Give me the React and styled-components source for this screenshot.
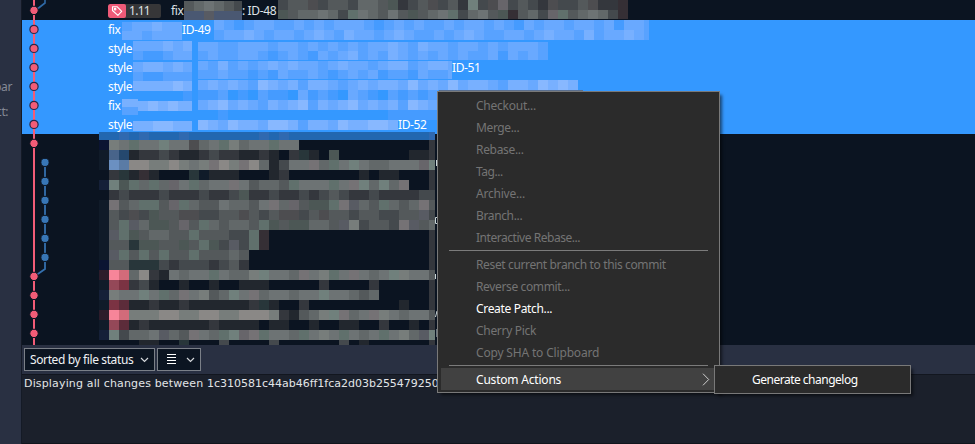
import React from "react";
import styled, { createGlobalStyle } from "styled-components";

const GlobalStyle = createGlobalStyle`
  * { box-sizing: border-box; }
  html, body { margin: 0; padding: 0; overflow: hidden; background: #0b1421; }
`;

const ui = `"Noto Sans", "Open Sans", sans-serif`;

const Window = styled.div`
  position: relative;
  display: flex;
  width: 975px;
  height: 444px;
  overflow: hidden;
  background: #0b1421;
  font: 12px/19px ${ui};
  letter-spacing: -0.36px;
  color: #fff;
  white-space: nowrap;
`;
const Sidebar = styled.aside`
  display: flex;
  flex-direction: column;
  align-items: flex-start;
  width: 22px;
  flex: none;
  padding-top: 74px;
  background: #293042;
  border-right: 1px solid #141a26;
  color: #858a96;
  overflow: hidden;
`;
const SideLabel = styled.span`
  height: 25px;
  line-height: 25px;
  margin-left: ${(p) => p.$shift}px;
`;
const Main = styled.main`
  display: flex;
  flex-direction: column;
  flex: 1;
  min-width: 0;
`;
const CommitList = styled.section`
  position: relative;
  height: 345px;
  flex: none;
  padding-top: 1px;
  overflow: hidden;
`;
const CommitRow = styled.div`
  display: flex;
  align-items: center;
  height: 19px;
  padding-left: 86px;
  background: ${(p) => (p.$selected ? "#3498ff" : "transparent")};
  color: ${(p) => (p.$selected ? "#fff" : "#dfe3e6")};
`;
const Label = styled.span`
  flex: none;
  width: ${(p) => p.$width}px;
`;
const TagBadge = styled.span`
  display: flex;
  align-items: center;
  width: 53px;
  height: 14px;
  margin-right: 10px;
  border-radius: 2px;
  background: #363638;
  overflow: hidden;
  letter-spacing: -0.7px;
`;
const TagIconBox = styled.span`
  display: flex;
  align-items: center;
  justify-content: center;
  width: 18px;
  height: 14px;
  margin-right: 3px;
  border-radius: 2px;
  background: #ef5a78;
`;
const Overlay = styled.svg`
  position: absolute;
  left: 0;
  top: 0;
  pointer-events: none;
`;
const FilterBar = styled.div`
  display: flex;
  align-items: flex-start;
  gap: 2px;
  height: 30px;
  flex: none;
  padding: 3px 0 0 2px;
  background: #293042;
  border-bottom: 1px solid #12161f;
`;
const Dropdown = styled.button`
  display: flex;
  align-items: center;
  justify-content: space-between;
  width: ${(p) => p.$width}px;
  height: 23px;
  margin: 0;
  padding: 0 5px 0 ${(p) => p.$pad}px;
  border: 1px solid #7b8088;
  background: #0c1522;
  color: #f0f2f4;
  font: 12px/20px ${ui};
  letter-spacing: -0.38px;
`;
const Status = styled.div`
  flex: 1;
  padding-left: 2px;
  background: #1b202b;
  border-bottom: 1px solid #11151d;
  font: 11px/18px "DejaVu Sans", sans-serif;
  letter-spacing: 0.155px;
  color: #e2e5e8;
`;
const Hash = styled.span`
  letter-spacing: -0.01px;
`;
const Menu = styled.div`
  position: absolute;
  left: ${(p) => p.$x}px;
  top: ${(p) => p.$y}px;
  width: ${(p) => p.$width}px;
  padding: 3px 3px 2px;
  border: 1px solid #797979;
  background: #2b2b2b;
  box-shadow: 3px 3px 3px -1px rgba(0, 0, 0, 0.55);
`;
const MenuItem = styled.div`
  display: flex;
  align-items: center;
  justify-content: space-between;
  height: 22px;
  padding: 0 ${(p) => (p.$active ? 6 : 0)}px ${(p) => (p.$active ? 0 : 1)}px ${(p) => p.$pad || 35}px;
  background: ${(p) => (p.$active ? "#414141" : "transparent")};
  color: ${(p) => (p.$enabled ? "#fff" : "#747474")};
  letter-spacing: ${(p) => p.$spacing}px;
`;
const Separator = styled.div`
  height: 1px;
  margin: ${(p) => p.$margin};
  background: #7b7b7b;
`;

const palette = {
  a: "#101b29", b: "#22272e", c: "#34373d", d: "#44494d", e: "#54595b",
  f: "#626869", g: "#6d7374", h: "#777d7b", i: "#8a8886",
  k: "#28363a", l: "#4c5755", m: "#60706c", n: "#70807c",
  p: "#352f35", q: "#4d4d50", r: "#67656a", s: "#757275",
  P: "#585b63", N: "#0b1432", V: "#152038", M: "#2d1c2b",
  1: "#48648a", 2: "#25486e", 3: "#6b90c1", 4: "#5a7ba5",
  5: "#f78599", 6: "#d26b7a", 7: "#944858", 8: "#7b3343", 9: "#5c2c3a",
  t: "#459bff", u: "#58a2ff", v: "#69a9ff", w: "#78b0ff", x: "#88b8ff",
  B: "#2267b0", C: "#3069b0", A: "#3498ff", S: "#4a5872",
};

const mosaics = [
  { x: 184, y: 1, h: 9.5, rows: ["efgfed", "SSPSSS"], w: 58 },
  { x: 278, y: 0, h: 9.5, w: 351, rows: [
    "deeqdeedffelcdeqdecndqrdedcqddeqccp",
    "leffgfdmgfegelefgmdfgelpefdrmefgfdp"] },
  { x: 122, y: 22, h: 9, w: 60, rows: ["uvvwvv", "vvuvvv"] },
  { x: 214, y: 20, h: 10, w: 435, rows: [
    "vutuvvuuvuvuvvvutuvuvuuvuvvuvutvuvvuvvuvtvvu",
    "uvvwvuvvuvwvuwvvuvwvuuvuvwvuuvvuvwvvuwuvvwvu"] },
  { x: 133, y: 41, h: 9.5, w: 59, rows: ["vvvwvw", "uttuvv"] },
  { x: 198, y: 42, h: 9, w: 351, rows: [
    "vvuuvvvuvvuvuvuvuvvwvuwvvuvvuvuvvvu",
    "uvuuvvutuvutvuvwuvuwvuvuvuvuuvtvuvu"] },
  { x: 133, y: 62, h: 9.5, w: 59, rows: ["vwwvwv", "uttuuu"] },
  { x: 198, y: 61, h: 9, w: 254, rows: ["vuwuvuvwvwvvuvwvvuvwwuvwwv", "uuvuututvuuvutuvuvtuutvuuv"] },
  { x: 133, y: 81, h: 10, w: 59, rows: ["wwwwxw", "AAAAAt"] },
  { x: 198, y: 80, h: 10, w: 381, rows: ["vwvwvuxwvwuwwvuvwvwwvxvwvxvwwvuwwvxwxw", "ttuAtAuttAvtutAvutAututu"] },
  { x: 122, y: 99, h: 8, w: 16, rows: ["ww", "uu"] },
  { x: 138, y: 101, h: 10, w: 54, rows: ["wxwxww"] },
  { x: 198, y: 100, h: 10, w: 240, rows: ["vwxvwvuwvwxuwvwxvwvwuxwv", "AAtAAAAAAAAAAAAAAAAttttt"] },
  { x: 133, y: 121, h: 10, w: 59, rows: ["wwxxww"] },
  { x: 198, y: 120, h: 10, w: 201, rows: ["xwvxwwvxxwuwwvxwwxxw"] },
  { x: 99, y: 132, h: 8, w: 336, rows: ["BBCBCBBBCBBBBBBBCBCBBBBBBBBBBBBBBC"] },
  { x: 99, y: 140, h: 10, w: 336, rows: [
    "Nhgmggnggqfgmhfggmgg.............c",
    "a12bccdcbbcdccbbcb.ckb.l.......bbc",
    "a34iihhihghsihsifbdggsfmgngffgggrn",
    ".ckbpb...kabbb...bc.......b.bb...c",
    "Vnlmfmfrgmfggsgeffemgggmgsnfnfs..c",
    ".cdcccdcccdccdlccdccdcdedccdccccdd",
    "asefmmermfeegffegsfrellmsPfemfefse",
    "aedqdleeqqddeeqedeqqdeqeedeeddeePd",
    "aemPflleremfeffemlellffePhdeedsPef",
    "aPmleffeemeeeddmp................c",
    "aeeklleelemldPdmp................c",
    "aPmememeemeeefe..................c",
    "Neekkkdcdddcdec..................c",
    "M56ficbgfggmgffhnggfsghmgsgfgnhgge",
    "a78cdb..b..b..bbb.....c....c.....c",
    "Vhggngmfsghefngsfggfggnggfef.....c",
    "a89bbcbbcbbbbbbckb..c.........b..c",
    "M56hhhiihhiihhiiihcbefhnsfgshgfgge",
    "a79bcbbbbbbcbbbb.bb..b..bb..c..b.c",
    "VndffgPfesgfmnrsmggfmghgmgfgmghfPn",
    "....bb..k...d....d......d.b......c"] },
];

const Mosaic = ({ x, y, w, h, rows }) => (
  <g shapeRendering="crispEdges" transform={`translate(${x - 22} ${y})`}>
    {rows.flatMap((row, r) =>
      [...row].map((c, i) =>
        palette[c] && i * 10 < w ? (
          <rect key={`${r}-${i}`} x={i * 10} y={r * h} width={Math.min(10, w - i * 10)} height={h} fill={palette[c]} />
        ) : null
      )
    )}
  </g>
);

const selectedDots = [29, 48, 67, 86, 105, 124];
const redDots = [10, 143, 276, 295, 314, 333];
const blueDots = [162, 181, 200, 219, 238, 257];

const Graph = () => (
  <g fill="none" strokeWidth="2">
    <path d="M23 0V3L14 10" stroke="#2f69a5" strokeWidth="1.6" />
    <path d="M12 0V345" stroke="#f25c77" />
    <path d="M23 162V269L13 276" stroke="#3470ae" strokeWidth="1.8" />
    {blueDots.map((y) => <circle key={y} cx="23" cy={y + 0.4} r="4.1" fill="#3876b6" stroke="#0b1421" strokeWidth="1" />)}
    {redDots.map((y) => <circle key={y} cx="12" cy={y + 0.4} r="4.2" fill="#f25c77" stroke="#0b1421" strokeWidth="1" />)}
    {selectedDots.map((y) => <circle key={y} cx="12" cy={y + 0.4} r="4.1" fill="#f25c77" stroke="#25294a" strokeWidth="1.2" />)}
  </g>
);

/* Edges of commit text that show between the redaction and the menu. */
const TextEdges = () => (
  <g stroke="#c9d6d8" fill="none" strokeWidth="1">
    <path d="M414.5 160V166M415 217.500H413.500V223.500H415M413.500 274V279M415 311L413.500 317M415 329V337" />
  </g>
);

const TagIcon = () => (
  <svg width="12" height="12" viewBox="0 0 12 12" fill="none" stroke="#fff" strokeWidth="1.1" strokeLinejoin="round">
    <path d="M1.5 1.800H6.300L10.700 6.400L6.900 10.300L1.500 5.500Z" />
    <circle cx="4.100" cy="4.200" r=".8" />
  </svg>
);
const Chevron = () => (
  <svg width="9" height="6" viewBox="0 0 9 6" fill="none" stroke="#d5d8dc" strokeWidth="1.2">
    <path d="M1 1L4.5 4.5L8 1" />
  </svg>
);
const ListIcon = () => (
  <svg width="10" height="11" viewBox="0 0 10 11" stroke="#fff" shapeRendering="crispEdges">
    <path d="M.5 .5H9.5M.5 3.5H9.5M.5 6.5H9.5M.5 9.500H9.5" />
  </svg>
);
const SubmenuArrow = () => (
  <svg width="8" height="13" viewBox="0 0 8 13" fill="none" stroke="#cfcfcf" strokeWidth="1">
    <path d="M1 .7L6.7 6.5L1 12.3" />
  </svg>
);

const commits = [
  { type: "fix", width: 74, id: "ID-49" },
  { type: "style" },
  { type: "style", width: 344, id: "ID-51" },
  { type: "style" },
  { type: "fix" },
  { type: "style", width: 290, id: "ID-52" },
];
const refActions = [
  ["Checkout...", -0.24], ["Merge...", -0.38], ["Rebase...", -0.32], ["Tag...", -0.45],
  ["Archive...", -0.22], ["Branch...", -0.36], ["Interactive Rebase...", -0.46],
];
const commitActions = [
  ["Reset current branch to this commit", -0.365], ["Reverse commit...", -0.36],
  ["Create Patch...", -0.33], ["Cherry Pick", -0.3], ["Copy SHA to Clipboard", -0.17],
];

export default function App() {
  return (
    <Window>
      <GlobalStyle />
      <Sidebar>
        <SideLabel $shift={-6}>par</SideLabel>
        <SideLabel $shift={-4}>ct:</SideLabel>
      </Sidebar>
      <Main>
        <CommitList>
          <CommitRow>
            <TagBadge><TagIconBox><TagIcon /></TagIconBox>1.11</TagBadge>
            <Label $width={71}>fix</Label>
            <Label>: ID-48</Label>
          </CommitRow>
          {commits.map((c, i) => (
            <CommitRow key={i} $selected>
              <Label $width={c.width}>{c.type}</Label>
              {c.id && <Label>{c.id}</Label>}
            </CommitRow>
          ))}
          <Overlay width="953" height="345" viewBox="0 0 953 345">
            {mosaics.map((m, i) => <Mosaic key={i} {...m} />)}
            <TextEdges />
            <path d="M417 90.500H561" stroke="#5a6f8e" />
            <Graph />
          </Overlay>
        </CommitList>
        <FilterBar>
          <Dropdown $width={131} $pad={5}>Sorted by file status <Chevron /></Dropdown>
          <Dropdown $width={44} $pad={8}><ListIcon /><Chevron /></Dropdown>
        </FilterBar>
        <Status>Displaying all changes between <Hash>1c310581c44ab46ff1fca2d03b255479250</Hash></Status>
      </Main>
      <Menu $x={437} $y={91} $width={283}>
        {refActions.map(([t, s]) => <MenuItem key={t} $spacing={s}>{t}</MenuItem>)}
        <Separator $margin="1px 8px 3px" />
        {commitActions.map(([t, s]) => <MenuItem key={t} $spacing={s} $enabled={t === "Create Patch..."}>{t}</MenuItem>)}
        <Separator $margin="1px 8px 2px" />
        <MenuItem $enabled $active $spacing={-0.2}>Custom Actions <SubmenuArrow /></MenuItem>
      </Menu>
      <Menu $x={714} $y={365} $width={197}>
        <MenuItem $enabled $pad={34} $spacing={-0.5}>Generate changelog</MenuItem>
      </Menu>
    </Window>
  );
}
